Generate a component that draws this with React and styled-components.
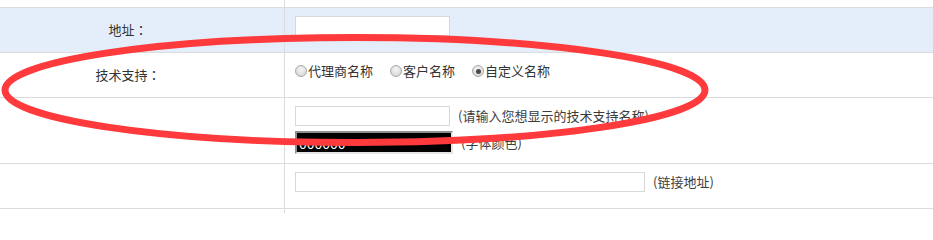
import React from "react";
import styled, { createGlobalStyle } from "styled-components";

const Global = createGlobalStyle`
  html, body { margin: 0; padding: 0; background: #fff; }
  body {
    font-family: "Noto Sans CJK SC", "Noto Sans", sans-serif;
    font-size: 13px;
    color: #333;
  }
  * { box-sizing: border-box; }
`;

const Page = styled.div`
  position: relative;
  width: 933px;
  height: 213px;
  overflow: hidden;
`;

const Table = styled.div`
  display: flex;
  flex-direction: column;
  height: 100%;
`;

const Row = styled.div`
  display: grid;
  grid-template-columns: 285px 1fr;
  height: ${(p) => (p.$h ? `${p.$h}px` : "auto")};
  border-bottom: ${(p) => (p.$last ? "none" : "1px solid #dcdcdc")};
  background: ${(p) => (p.$alt ? "#e3eefa" : "#fff")};
  flex: ${(p) => (p.$fill ? "1" : "none")};
`;

const Label = styled.div`
  display: flex;
  align-items: center;
  justify-content: center;
  padding-right: 28px;
  border-right: 1px solid #dcdcdc;
  line-height: 20px;
  color: #333;
`;

const Colon = styled.span`
  font-family: "Noto Sans CJK TC", "Noto Sans CJK SC", sans-serif;
`;

const Value = styled.div`
  display: flex;
  flex-direction: column;
  gap: 5px;
  padding: 8px 0 0 10px;
`;

const Line = styled.div`
  display: flex;
  align-items: center;
  gap: 8px;
  line-height: 20px;
`;

const TextInput = styled.input`
  width: ${(p) => p.$w}px;
  height: 20px;
  margin: 0;
  padding: 0 2px;
  border: 1px solid #d8d8d8;
  background: #fff;
  font: inherit;
  outline: none;
`;

const ColorInput = styled.input`
  width: 158px;
  height: 23px;
  margin: 0;
  padding: 0 2px;
  border: 2px solid #8f8f8f;
  border-right-color: #e6e6e6;
  border-bottom-color: #e6e6e6;
  background: #000;
  color: #fff;
  font: inherit;
  font-size: 14px;
  outline: none;
`;

const Hint = styled.span`
  color: #3c3c3c;
  white-space: nowrap;
`;

const Options = styled.div`
  display: flex;
  align-items: center;
  line-height: 20px;
`;

const Option = styled.label`
  display: flex;
  align-items: center;
  gap: 1px;
  margin-right: 17px;
  white-space: nowrap;
`;

const Radio = styled.input`
  appearance: none;
  -webkit-appearance: none;
  width: 12px;
  height: 12px;
  margin: 0;
  border-radius: 50%;
  border: 1px solid #a9a9a9;
  background: radial-gradient(circle at 50% 35%, #f4f4f4 0%, #dcdcdc 70%, #c8c8c8 100%);
  position: relative;
  &:checked::after {
    content: "";
    position: absolute;
    left: 2.5px;
    top: 2.5px;
    width: 5px;
    height: 5px;
    border-radius: 50%;
    background: #4a4a4a;
  }
`;

const Mark = styled.svg`
  position: absolute;
  left: 0;
  top: 0;
  pointer-events: none;
`;

export default function App() {
  return (
    <>
      <Global />
      <Page>
        <Table>
          <Row $h={8}>
            <Label />
            <div />
          </Row>
          <Row $h={45} $alt>
            <Label>
              地址<Colon>：</Colon>
            </Label>
            <Value>
              <Line>
                <TextInput $w={155} defaultValue="" />
              </Line>
            </Value>
          </Row>
          <Row $h={45}>
            <Label>
              技术支持<Colon>：</Colon>
            </Label>
            <Value>
              <Options>
                <Option>
                  <Radio type="radio" name="tech" />
                  代理商名称
                </Option>
                <Option>
                  <Radio type="radio" name="tech" />
                  客户名称
                </Option>
                <Option>
                  <Radio type="radio" name="tech" defaultChecked />
                  自定义名称
                </Option>
              </Options>
            </Value>
          </Row>
          <Row $h={66}>
            <Label />
            <Value>
              <Line>
                <TextInput $w={155} defaultValue="" />
                <Hint>(请输入您想显示的技术支持名称)</Hint>
              </Line>
              <Line>
                <ColorInput defaultValue="000000" />
                <Hint>(字体颜色)</Hint>
              </Line>
            </Value>
          </Row>
          <Row $h={45}>
            <Label />
            <Value>
              <Line>
                <TextInput $w={350} defaultValue="" />
                <Hint>(链接地址)</Hint>
              </Line>
            </Value>
          </Row>
          <Row $fill $last>
            <Label />
            <div />
          </Row>
        </Table>
        <Mark width="933" height="213" viewBox="0 0 933 213">
          <ellipse
            cx="355"
            cy="90"
            rx="350"
            ry="52.5"
            fill="none"
            stroke="#fe3a3c"
            strokeWidth="7"
          />
        </Mark>
      </Page>
    </>
  );
}
